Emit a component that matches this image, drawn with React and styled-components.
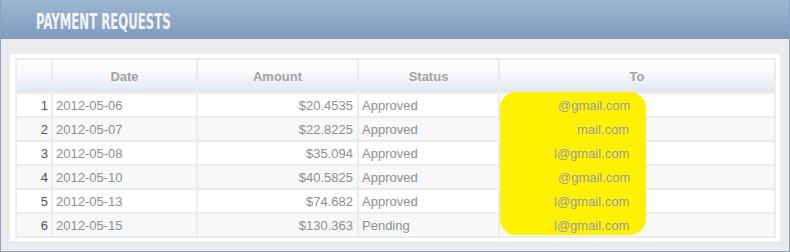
import React from 'react';
import styled, { createGlobalStyle } from 'styled-components';

const rows = [
  { id: 1, date: '2012-05-06', amount: '$20.4535', status: 'Approved', to: '@gmail.com' },
  { id: 2, date: '2012-05-07', amount: '$22.8225', status: 'Approved', to: 'mail.com', pad: 77 },
  { id: 3, date: '2012-05-08', amount: '$35.094', status: 'Approved', to: 'l@gmail.com', pad: 54 },
  { id: 4, date: '2012-05-10', amount: '$40.5825', status: 'Approved', to: '@gmail.com' },
  { id: 5, date: '2012-05-13', amount: '$74.682', status: 'Approved', to: 'l@gmail.com', pad: 54 },
  { id: 6, date: '2012-05-15', amount: '$130.363', status: 'Pending', to: 'l@gmail.com', pad: 54 },
];

const Global = createGlobalStyle`
  body {
    margin: 0;
    background: #fff;
    font-family: "Liberation Sans", Arial, sans-serif;
  }
`;

function App() {
  return (
    <>
      <Global />
      <Panel>
        <Header>
          <Title>PAYMENT REQUESTS</Title>
        </Header>
        <Body>
          <Sheet>
            <Highlight />
            <Table>
              <colgroup>
                <col style={{ width: 36 }} />
                <col style={{ width: 145 }} />
                <col style={{ width: 161 }} />
                <col style={{ width: 141 }} />
                <col />
              </colgroup>
              <thead>
                <tr>
                  <Th />
                  <Th>Date</Th>
                  <Th>Amount</Th>
                  <Th>Status</Th>
                  <Th>To</Th>
                </tr>
              </thead>
              <tbody>
                {rows.map((r, idx) => (
                  <Row key={r.id} $odd={idx % 2 === 1}>
                    <Num>{r.id}</Num>
                    <Td>{r.date}</Td>
                    <Td $right>{r.amount}</Td>
                    <Td>{r.status}</Td>
                    <Email $pad={r.pad || 58}>
                      <EmailText>{r.to}</EmailText>
                    </Email>
                  </Row>
                ))}
              </tbody>
            </Table>
          </Sheet>
        </Body>
      </Panel>
    </>
  );
}

const Panel = styled.div`
  width: 790px;
  height: 252px;
  box-sizing: border-box;
  border: 1px solid #87a3c3;
  border-top: none;
  background: #ebebeb;
  display: flex;
  flex-direction: column;
`;

const Header = styled.div`
  height: 40px;
  display: flex;
  align-items: center;
  padding-left: 35px;
  background: linear-gradient(to bottom, #9db6d3 0%, #8ba6c6 60%, #7f9cbd 100%);
`;

const Title = styled.span`
  display: inline-block;
  font-family: "DejaVu Sans Condensed", "DejaVu Sans", sans-serif;
  font-stretch: condensed;
  font-weight: bold;
  font-size: 21px;
  color: #f1f5f9;
  transform: scaleX(0.62);
  transform-origin: left center;
  margin-top: 5px;
`;

const Body = styled.div`
  flex: 1;
  padding: 15px 9px 10px 9px;
`;

const Sheet = styled.div`
  position: relative;
  background: #fff;
  padding: 4px 2px 3px 5px;
`;

const Highlight = styled.div`
  position: absolute;
  z-index: 1;
  left: 490px;
  top: 38px;
  width: 146px;
  height: 143px;
  border-radius: 16px;
  background: #fff200;
`;

const Table = styled.table`
  width: 761px;
  border-collapse: collapse;
  table-layout: fixed;
  font-size: 13px;
  border: 2px solid #ececec;
`;

const Th = styled.th`
  height: 32px;
  padding: 0;
  border: 2px solid #ececec;
  border-top: none;
  background: linear-gradient(to bottom, #ffffff 0%, #f6f8fb 45%, #e2e7f0 100%);
  color: #a3a3a3;
  font-weight: bold;
  text-align: center;
`;

const Row = styled.tr`
  background: ${(p) => (p.$odd ? '#f8f8f8' : '#ffffff')};
`;

const Td = styled.td`
  height: 22px;
  padding: 0 4px 0 3px;
  border: 2px solid #ececec;
  color: #8f8f8f;
  white-space: nowrap;
  text-align: ${(p) => (p.$right ? 'right' : 'left')};
  &:first-child {
    border-left: none;
  }
`;

const Num = styled(Td)`
  text-align: right;
  color: #555;
  padding-right: 3px;
`;

const Email = styled(Td)`
  padding-left: ${(p) => p.$pad}px;
`;

const EmailText = styled.span`
  position: relative;
  z-index: 2;
  color: #9898b4;
`;

export default App;
